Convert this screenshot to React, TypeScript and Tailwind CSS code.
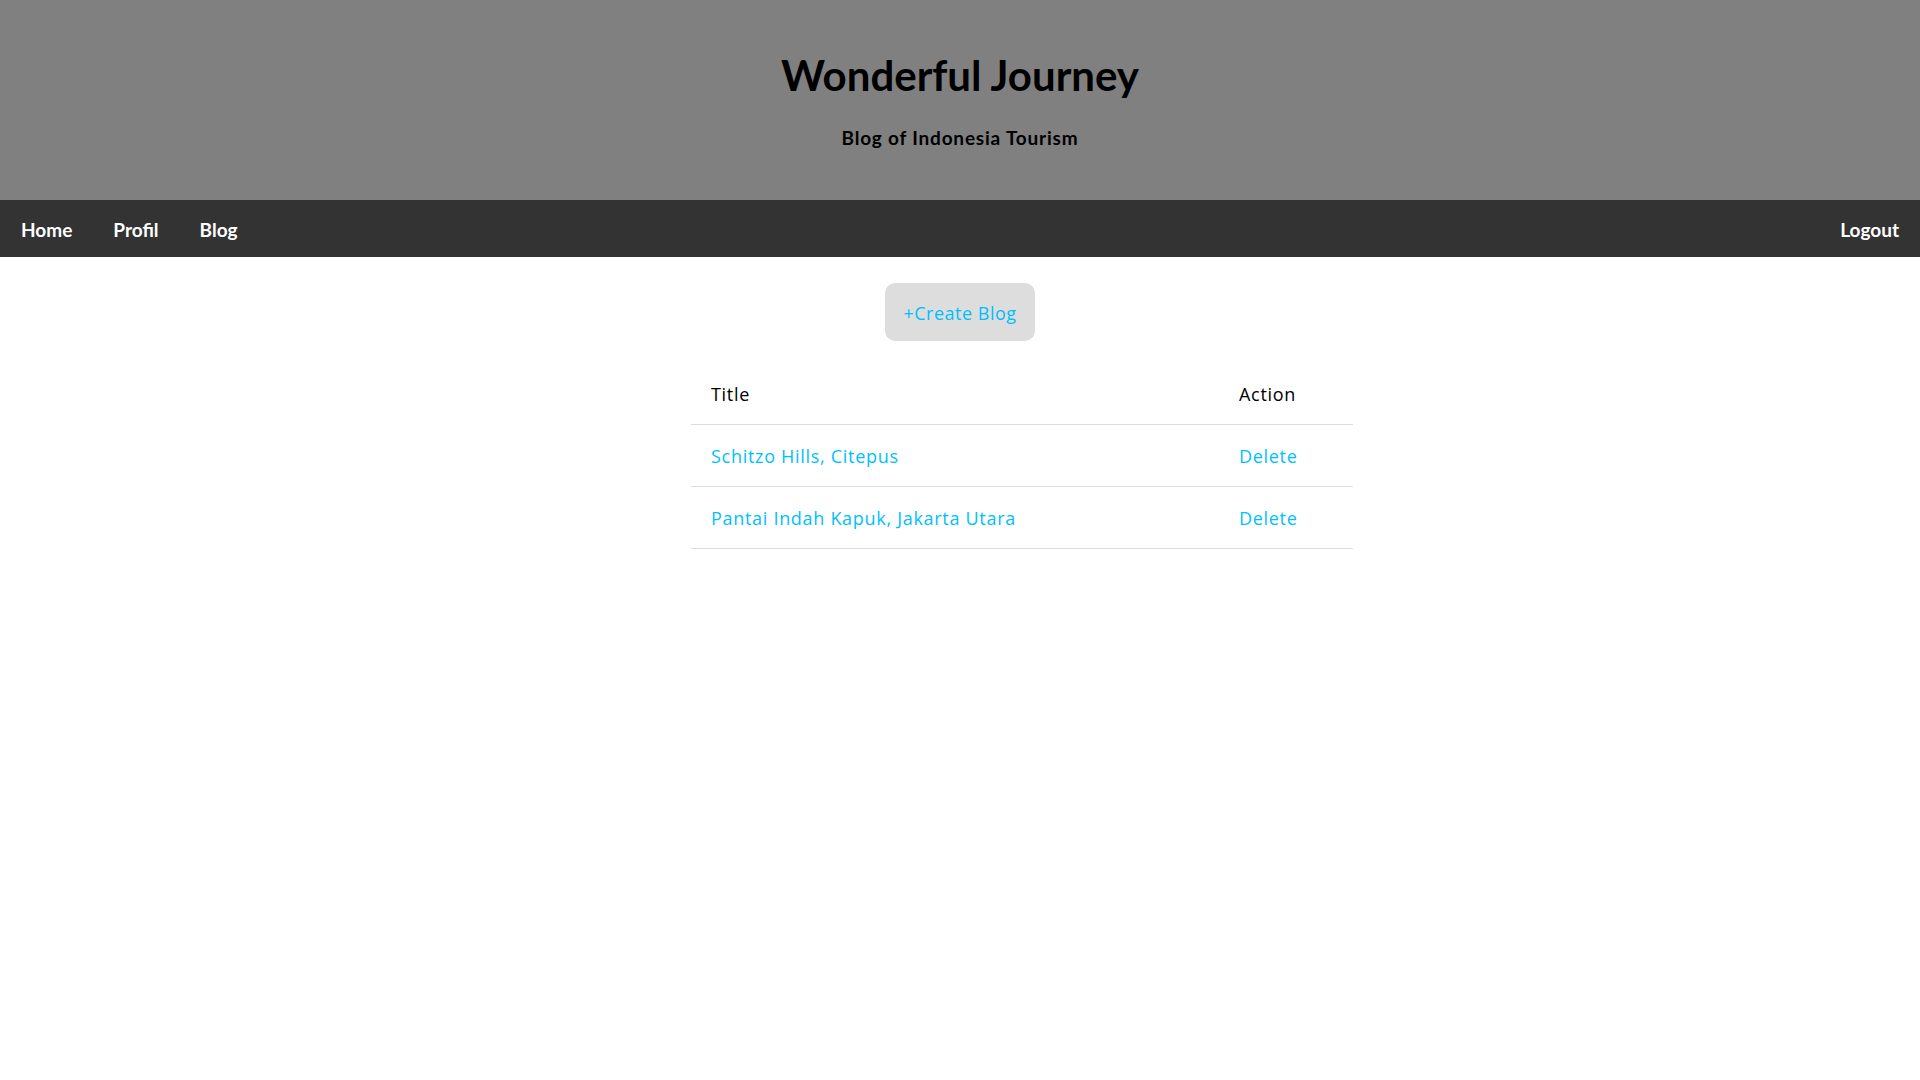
import React from "react";

const lato = { fontFamily: "Lato, 'Open Sans', sans-serif" };
const open = { fontFamily: "'Open Sans', Lato, sans-serif" };

export default function App() {
  const rows = ["Schitzo Hills, Citepus", "Pantai Indah Kapuk, Jakarta Utara"];
  return (
    <div className="min-h-[1080px] bg-white text-black" style={lato}>
      <header className="h-[200px] bg-[#808080] flex flex-col items-center">
        <h1 className="mt-[49px] text-[42px] leading-[52px] font-bold">Wonderful Journey</h1>
        <h3 className="mt-[25px] text-[19px] leading-[24px] font-bold tracking-[0.8px]">Blog of Indonesia Tourism</h3>
      </header>
      <nav className="h-[57px] bg-[#333333] flex items-center justify-between px-[21px] pt-[4px] text-white text-[19px] font-bold">
        <div className="flex gap-[41px]">
          <a>Home</a>
          <a>Profil</a>
          <a>Blog</a>
        </div>
        <a>Logout</a>
      </nav>
      <div className="flex justify-center mt-[26px]">
        <button className="w-[150px] h-[58px] pt-[2px] rounded-[10px] bg-[#dddddd] text-[#00bfff] text-[18px] tracking-[0.5px]" style={open}>+Create Blog</button>
      </div>
      <table className="ml-[691px] w-[662px] mt-[22px] border-collapse text-[18px] tracking-[0.7px]" style={open}>
        <thead>
          <tr className="border-b border-[#dddddd]">
            <th className="text-left font-normal pl-[20px] pt-[2px] h-[61px]">Title</th>
            <th className="text-left font-normal pl-[20px] pt-[2px] w-[134px]">Action</th>
          </tr>
        </thead>
        <tbody>
          {rows.map((r) => (
            <tr key={r} className="border-b border-[#dddddd] text-[#00bfff]">
              <td className="pl-[20px] pt-[2px] h-[62px]">{r}</td>
              <td className="pl-[20px] pt-[2px]">Delete</td>
            </tr>
          ))}
        </tbody>
      </table>
    </div>
  );
}
